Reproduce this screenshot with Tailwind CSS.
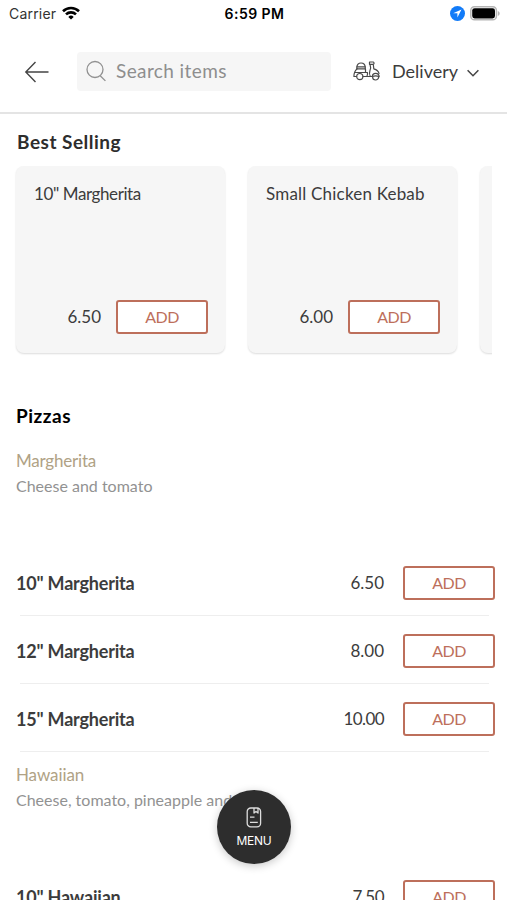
<!DOCTYPE html>
<html lang="en">
<head>
  <meta charset="UTF-8" />
  <meta name="viewport" content="width=device-width, initial-scale=1" />
  <title>Menu</title>
  <script src="https://cdn.jsdelivr.net/npm/@tailwindcss/browser@4"></script>
</head>
<body class="bg-white text-[#3c3c3c] font-['Lato','Liberation_Sans',sans-serif]">
<div class="relative w-[507px] h-[900px] overflow-hidden flex flex-col">

  <!-- Status bar -->
  <div class="h-7 shrink-0 grid grid-cols-3 items-center pl-[9px] pr-[7px] pb-0.5 text-[14px] text-black font-['Inter',sans-serif]">
    <div class="flex items-center gap-1.5">
      <span class="text-[#333] tracking-[0.2px]">Carrier</span>
      <svg class="w-[18px] h-[14px]" viewBox="0 0 18 14" fill="none" stroke="#000" stroke-width="2.6">
        <path d="M1 5.2a11.5 11.5 0 0 1 16 0" />
        <path d="M4 8.4a7.2 7.2 0 0 1 10 0" />
        <path d="M9 13.6L6.3 10.9a3.9 3.9 0 0 1 5.4 0z" fill="#000" stroke="none" />
      </svg>
    </div>
    <span class="text-center font-semibold tracking-[0.45px]">6:59 PM</span>
    <div class="flex items-center justify-end gap-[5px]">
      <svg class="w-[15px] h-[15px]" viewBox="0 0 15 15">
        <circle cx="7.5" cy="7.5" r="7.5" fill="#127bf8" />
        <path d="M11.5 3.5L3.2 7.3h4.2v4.3z" fill="#fff" />
      </svg>
      <svg class="w-[30px] h-[15px]" viewBox="0 0 30 15">
        <rect x="0.8" y="0.8" width="25.6" height="13" rx="3.6" fill="#fff" stroke="#b5b5b5" stroke-width="1.5" />
        <rect x="2.2" y="2.2" width="22.8" height="10.2" rx="2.4" fill="#000" />
        <path d="M27.8 5v5c1.200-.5 1.900-1.400 1.900-2.500s-.7-2-1.900-2.500z" fill="#b5b5b5" />
      </svg>
    </div>
  </div>

  <!-- Header -->
  <header class="h-[86px] shrink-0 flex items-center pl-6 pr-[27px] pb-0.5 pt-1 border-b-2 border-[#e4e4e4]">
    <svg class="w-[26px] h-[22px] mt-px" viewBox="0 0 26 22" fill="none" stroke="#444" stroke-width="1.4">
      <path d="M11.500 1L1.800 11l9.700 10M1.800 11H24.500" />
    </svg>
    <div class="ml-[27px] w-[254px] h-[39px] rounded bg-[#f6f6f6] flex items-center pl-[9px]">
      <svg class="w-[21px] h-[22px]" viewBox="0 0 21 22" fill="none" stroke="#919191" stroke-width="1.3">
        <circle cx="9" cy="9.500" r="8" />
        <path d="M14.200 15.700L19.400 20.900" />
      </svg>
      <span class="ml-[9px] text-[19px] text-[#8e8e8e] tracking-[0.4px]">Search items</span>
    </div>
    <div class="ml-[22px] flex items-center">
      <svg class="w-[27px] h-[20px]" viewBox="0 0 27 20" fill="none" stroke="#4a4a4a" stroke-width="1.200" stroke-linejoin="round" stroke-linecap="round">
        <path d="M3.900 7.800V6.200C3.900 3.700 5.500 2 8 2s4.200 1.700 4.200 4.200v1.600" />
        <path d="M3.900 5.900h8.300M4 7.900h8.500v3.600" />
        <path d="M4 7.900C1.900 9.700.9 12.500.9 15.500h2.700M2.200 11.500h12.200c.4 1.200.1 2.600-.5 4" />
        <path d="M10 15.500h9.400" />
        <circle cx="6.800" cy="15.600" r="3.100" />
        <path d="M19.600 16a3 3 0 1 0 6 0M19.300 15.500c.2-4.300 6.600-4.300 6.900.2-2.400-1.200-4.400-1.200-6.900-.2z" />
        <path d="M16.500 1h3.800c1 .4 1 1.900 0 2.300l.5 4.600c2.800.8 4.800 2.400 5.200 4.600M17 3.300c1 2.800.8 4.500-.1 6.500-.8 2-.5 3.800.4 5.700M16.500 1v2.300h3.800" />
      </svg>
      <span class="ml-3 w-[67px] text-[18px]">Delivery</span>
      <svg class="ml-2 w-3 h-2 mt-1" viewBox="0 0 12 8" fill="none" stroke="#444" stroke-width="1.5">
        <path d="M.6 1.200L6 6.700l5.400-5.500" />
      </svg>
    </div>
  </header>

  <!-- Best selling -->
  <section class="shrink-0 px-4 pt-[14px]">
    <h2 class="text-[19px] leading-7 font-bold text-[#2d2d2d] pl-px tracking-[0.5px]">Best Selling</h2>
    <div class="mt-[10px] -mx-1 px-1 pb-2 w-[480px] flex gap-[23px] overflow-hidden">
      <div class="w-[209px] h-[187px] shrink-0 rounded-lg bg-[#f6f6f6] shadow-[0_1px_2px_rgba(0,0,0,0.14)] flex flex-col justify-between pl-[18px] pr-[17px] pt-4 pb-[19px]">
        <p class="text-[17px] leading-6 tracking-[-0.4px]">10" Margherita</p>
        <div class="flex items-center justify-end gap-[15px]">
          <span class="text-[17px]">6.50</span>
          <button class="w-[92px] h-[34px] border-2 border-[#bd6f5b] rounded-[3px] bg-white text-[16px] text-[#bd6f5b] tracking-[-0.5px] pb-px">ADD</button>
        </div>
      </div>
      <div class="w-[209px] h-[187px] shrink-0 rounded-lg bg-[#f6f6f6] shadow-[0_1px_2px_rgba(0,0,0,0.14)] flex flex-col justify-between pl-[18px] pr-[17px] pt-4 pb-[19px]">
        <p class="text-[17px] leading-6 tracking-[0.2px]">Small Chicken Kebab</p>
        <div class="flex items-center justify-end gap-[15px]">
          <span class="text-[17px]">6.00</span>
          <button class="w-[92px] h-[34px] border-2 border-[#bd6f5b] rounded-[3px] bg-white text-[16px] text-[#bd6f5b] tracking-[-0.5px] pb-px">ADD</button>
        </div>
      </div>
      <div class="w-[209px] h-[187px] shrink-0 rounded-lg bg-[#f6f6f6] shadow-[0_1px_2px_rgba(0,0,0,0.14)]"></div>
    </div>
  </section>

  <!-- Pizzas -->
  <section class="shrink-0 pl-4 pr-3 pt-[41px]">
    <h2 class="text-[19px] leading-7 font-bold text-black tracking-[0.5px]">Pizzas</h2>

    <div class="mt-[19px] h-[99px]">
      <h3 class="text-[17px] leading-6 text-[#b0a285] tracking-[-0.2px]">Margherita</h3>
      <p class="mt-px text-[16px] leading-6 text-[#929292]">Cheese and tomato</p>
    </div>
    <div class="h-[68px] pt-0.5 flex items-center">
      <span class="flex-1 text-[18px] font-bold tracking-[-0.2px]">10" Margherita</span>
      <span class="text-[17px] mr-[19px]">6.50</span>
      <button class="w-[92px] h-[34px] border-2 border-[#bd6f5b] rounded-[3px] text-[16px] text-[#bd6f5b] tracking-[-0.5px] pb-px">ADD</button>
    </div>
    <div class="ml-1 mr-[6px] -mt-px h-px bg-[#eee]"></div>
    <div class="h-[68px] pt-0.5 flex items-center">
      <span class="flex-1 text-[18px] font-bold tracking-[-0.2px]">12" Margherita</span>
      <span class="text-[17px] mr-[19px]">8.00</span>
      <button class="w-[92px] h-[34px] border-2 border-[#bd6f5b] rounded-[3px] text-[16px] text-[#bd6f5b] tracking-[-0.5px] pb-px">ADD</button>
    </div>
    <div class="ml-1 mr-[6px] -mt-px h-px bg-[#eee]"></div>
    <div class="h-[68px] pt-0.5 flex items-center">
      <span class="flex-1 text-[18px] font-bold tracking-[-0.2px]">15" Margherita</span>
      <span class="text-[17px] mr-[19px] tracking-[-0.6px]">10.00</span>
      <button class="w-[92px] h-[34px] border-2 border-[#bd6f5b] rounded-[3px] text-[16px] text-[#bd6f5b] tracking-[-0.5px] pb-px">ADD</button>
    </div>
    <div class="ml-1 mr-[6px] -mt-px h-px bg-[#eee]"></div>

    <div class="mt-[11px] h-[99px]">
      <h3 class="text-[17px] leading-6 text-[#b0a285] tracking-[-0.1px]">Hawaiian</h3>
      <p class="mt-px text-[16px] leading-6 text-[#929292]">Cheese, tomato, pineapple and</p>
    </div>
    <div class="h-[68px] pt-0.5 flex items-center">
      <span class="flex-1 text-[18px] font-bold tracking-[-0.2px]">10" Hawaiian</span>
      <span class="text-[17px] mr-[19px] tracking-[-0.5px]">7.50</span>
      <button class="w-[92px] h-[34px] border-2 border-[#bd6f5b] rounded-[3px] text-[16px] text-[#bd6f5b] tracking-[-0.5px] pb-px">ADD</button>
    </div>
  </section>

  <!-- Floating menu button -->
  <button class="absolute left-[217px] top-[790px] w-[74px] h-[74px] rounded-full bg-[#2d2d2d] text-white flex flex-col items-center pt-[17px] shadow-[0_2px_8px_rgba(0,0,0,0.22)]">
    <svg class="w-[16px] h-[21px]" viewBox="0 0 16 21" fill="none" stroke="#ddd" stroke-width="1.3" stroke-linejoin="round">
      <rect x="1.200" y="1" width="13.400" height="18.800" rx="3.600" />
      <path d="M8 1v5l2-1.500 2 1.500V1M4 10.200h4.500M4 15.300h7.800" />
    </svg>
    <span class="mt-[5px] text-[12px] leading-4 font-['Inter',sans-serif] tracking-[-0.2px]">MENU</span>
  </button>
</div>
</body>
</html>
